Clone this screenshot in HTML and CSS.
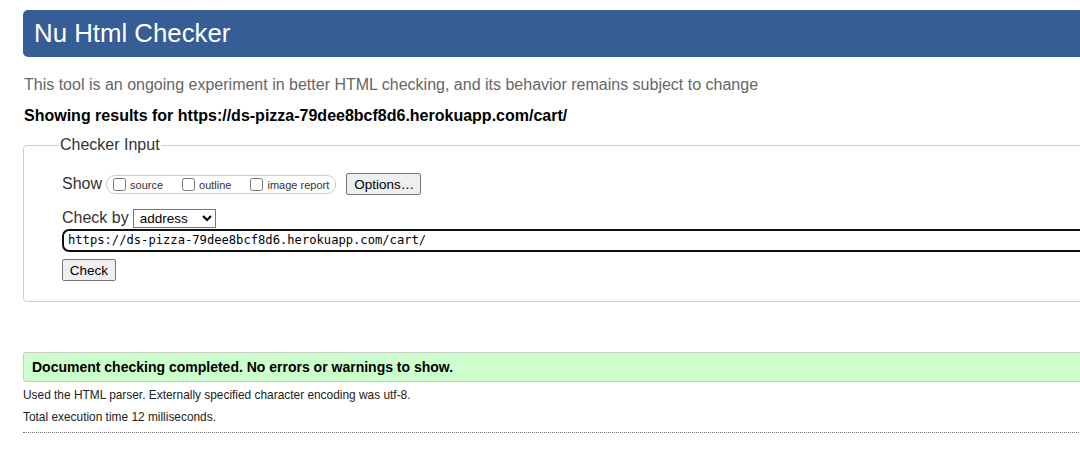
FILE: index.html
```html
<!DOCTYPE html>
<html lang="en">
<head>
<meta charset="utf-8">
<title>Nu Html Checker</title>
<link rel="stylesheet" href="styles.css">
</head>
<body>
<div class="page">
  <h1 class="title">Nu Html Checker</h1>
  <p class="tagline">This tool is an ongoing experiment in better HTML checking, and its behavior remains subject to change</p>
  <p class="results-for">Showing results for https://ds-pizza-79dee8bcf8d6.herokuapp.com/cart/</p>
  <fieldset class="checker">
    <legend class="legend">Checker Input</legend>
    <div class="row show-row">
      <span class="label">Show</span>
      <span class="show-box">
        <label class="opt"><input type="checkbox">source</label>
        <label class="opt"><input type="checkbox">outline</label>
        <label class="opt"><input type="checkbox">image report</label>
      </span>
      <button class="btn options" type="button">Options…</button>
    </div>
    <div class="row by-row">
      <span class="label">Check by</span>
      <select class="select"><option>address</option></select>
    </div>
    <div class="url">https://ds-pizza-79dee8bcf8d6.herokuapp.com/cart/</div>
    <div class="row">
      <button class="btn check" type="button">Check</button>
    </div>
  </fieldset>
  <div class="success">Document checking completed. No errors or warnings to show.</div>
  <p class="note">Used the HTML parser. Externally specified character encoding was utf-8.</p>
  <p class="note">Total execution time 12 milliseconds.</p>
  <div class="rule"></div>
</div>
</body>
</html>
```
FILE: styles.css
```css
html, body {
  margin: 0;
  padding: 0;
  overflow: hidden;
  background: #ffffff;
}
body {
  font-family: "Liberation Sans", Arial, sans-serif;
  color: #000;
}
.page {
  width: 1120px;
  padding: 10px 0 0 23px;
}
.title {
  margin: 0;
  height: 47px;
  box-sizing: border-box;
  padding: 7px 0 0 11px;
  background: #365d95;
  color: #fff;
  font-weight: normal;
  font-size: 25.8px;
  line-height: 32px;
  border-radius: 5px 0 0 5px;
}
.tagline {
  margin: 18px 0 0 1px;
  color: #666;
  font-size: 16px;
  line-height: 20px;
}
.results-for {
  margin: 11px 0 0 1px;
  font-weight: bold;
  font-size: 16px;
  line-height: 20px;
}
.checker {
  margin: 10px 0 0 0;
  padding: 10px 0 20px 38px;
  border: 1px solid #ccc;
  border-radius: 4px 0 0 4px;
}
.legend {
  padding: 0 1px;
  margin-left: -3px;
  font-size: 16px;
  color: #333;
}
.row {
  display: flex;
  align-items: center;
}
.label {
  font-size: 16px;
  color: #333;
}
.show-row {
  margin-top: 9px;
  height: 22px;
}
.show-box {
  display: flex;
  align-items: center;
  margin-left: 4px;
  height: 19px;
  box-sizing: border-box;
  padding: 0 6px 0 6px;
  border: 1px solid #ccc;
  border-radius: 9px;
  gap: 19px;
}
.opt {
  display: flex;
  align-items: center;
  font-size: 11px;
  color: #333;
  padding-top: 2px;
  white-space: nowrap;
}
.opt input {
  margin: -2px 4px 0 0;
  width: 13px;
  height: 13px;
}
.btn {
  font-family: "Liberation Sans", Arial, sans-serif;
  font-size: 13.5px;
  color: #000;
  background: #efefef;
  border: 1px solid #767676;
  border-radius: 2px;
  padding: 1px 7px;
  height: 22px;
  box-sizing: border-box;
}
.options {
  margin-left: 10px;
  width: 75px;
}
.by-row {
  margin-top: 13px;
  height: 20px;
}
.select {
  margin-left: 4px;
  font-family: "Liberation Sans", Arial, sans-serif;
  font-size: 13.5px;
  height: 19px;
  width: 83px;
  padding: 0 0 0 2px;
  border: 1px solid #767676;
  border-radius: 0;
  background: #fff;
  color: #000;
}
.url {
  margin-top: 1px;
  height: 19px;
  border: 2px solid #101010;
  border-right: none;
  border-radius: 7px 0 0 7px;
  padding: 0 0 0 4px;
  font-family: "DejaVu Sans Mono", "Liberation Mono", monospace;
  font-size: 12.15px;
  line-height: 19px;
  color: #000;
}
.check {
  margin-top: 7px;
  width: 54px;
  padding: 1px 0;
}
.success {
  margin-top: 50px;
  height: 30px;
  box-sizing: border-box;
  background: #ccffcc;
  border: 1px solid #ccc;
  border-right: none;
  border-radius: 3px 0 0 3px;
  padding: 6px 0 0 8px;
  font-weight: bold;
  font-size: 14px;
  line-height: 17px;
}
.note {
  margin: 6px 0 0 0;
  font-size: 11.9px;
  line-height: 15px;
  color: #222;
}
.note + .note {
  margin-top: 7px;
}
.rule {
  margin-top: 7px;
  border-top: 1px dotted #666;
}
```
